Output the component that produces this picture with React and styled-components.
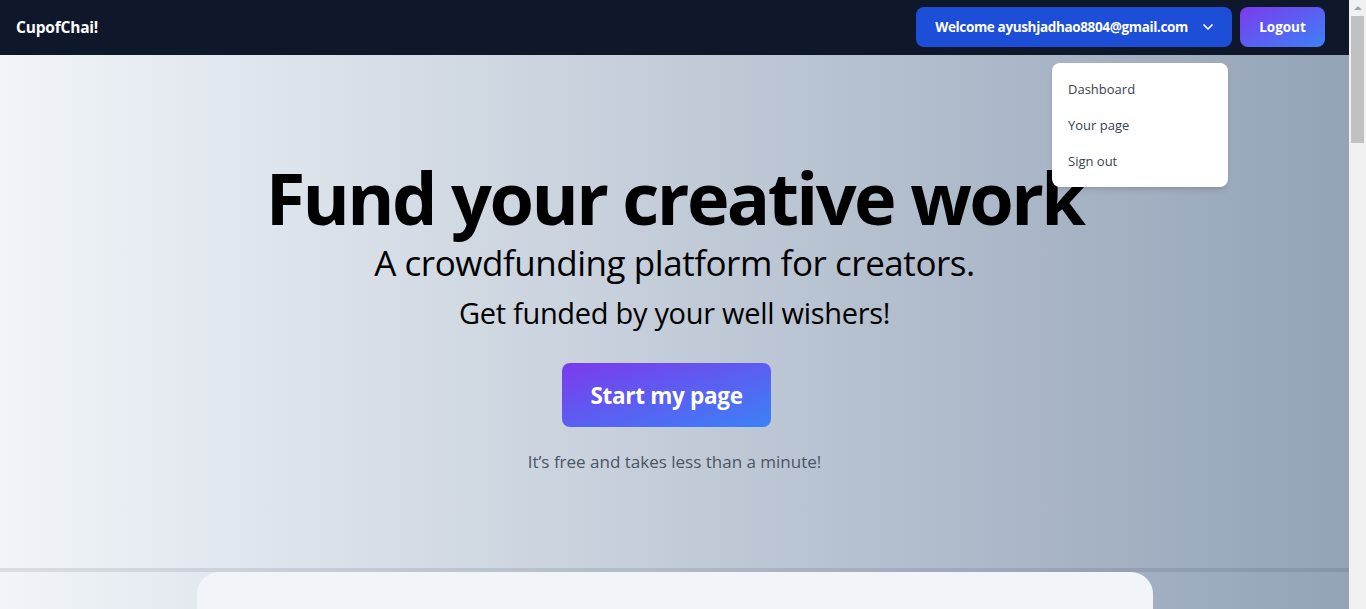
import React from "react";
import styled, { createGlobalStyle } from "styled-components";

const GlobalStyle = createGlobalStyle`
  html, body { margin: 0; padding: 0; overflow: hidden; }
  body {
    font-family: "Open Sans", "Noto Sans", "Liberation Sans", sans-serif;
  }
`;

const Viewport = styled.div`
  display: flex;
  height: 100vh;
  overflow: hidden;
`;

const Page = styled.div`
  flex: 1;
  min-width: 0;
  overflow: hidden;
  background: linear-gradient(to right, #f1f5f9, #94a3b8);
`;

const ScrollTrack = styled.div`
  width: 17px;
  flex-shrink: 0;
  background: #f1f1f1;
  display: flex;
  flex-direction: column;
  align-items: center;
`;

const ScrollArrow = styled.div`
  margin-top: 6px;
  width: 0;
  height: 0;
  border-left: 4px solid transparent;
  border-right: 4px solid transparent;
  border-bottom: 4px solid #a3a3a3;
`;

const ScrollThumb = styled.div`
  margin-top: 6px;
  width: 13px;
  height: 127px;
  background: #c1c1c1;
`;

const Nav = styled.nav`
  box-sizing: border-box;
  height: 55px;
  background: #0f172a;
  display: flex;
  align-items: center;
  justify-content: space-between;
  padding: 0 24px 1px 16px;
  color: #fff;
`;

const Logo = styled.div`
  font-weight: 700;
  font-size: 15.5px;
  letter-spacing: -0.2px;
`;

const NavRight = styled.div`
  display: flex;
  align-items: center;
  gap: 8px;
`;

const MenuWrap = styled.div`
  position: relative;
`;

const WelcomeButton = styled.button`
  height: 40px;
  display: flex;
  align-items: center;
  gap: 12px;
  padding: 0 16px 0 19px;
  background: #1d4ed8;
  color: #fff;
  border: 0;
  border-radius: 8px;
  font-family: inherit;
  font-weight: 700;
  font-size: 13.5px;
  letter-spacing: -0.35px;
`;

const LogoutButton = styled.button`
  height: 40px;
  width: 85px;
  background: linear-gradient(to bottom right, #7c3aed, #3b82f6);
  color: #fff;
  border: 0;
  border-radius: 8px;
  font-family: inherit;
  font-weight: 700;
  font-size: 13.5px;
`;

const Dropdown = styled.ul`
  position: absolute;
  top: 56px;
  right: 4px;
  width: 176px;
  margin: 0;
  padding: 8px 0;
  list-style: none;
  background: #fff;
  border-radius: 8px;
  box-shadow: 0 4px 6px -1px rgba(0,0,0,0.1), 0 2px 4px -2px rgba(0,0,0,0.1);
  z-index: 10;
`;

const DropItem = styled.li`
  padding: 8px 16px;
  font-size: 13px;
  line-height: 20px;
  color: #374151;
`;

const Hero = styled.section`
  height: 513px;
  display: flex;
  flex-direction: column;
  align-items: center;
  padding-top: 103px;
  box-sizing: border-box;
  text-align: center;
`;

const Title = styled.h1`
  margin: 0;
  font-size: 72px;
  line-height: 78px;
  font-weight: 700;
  letter-spacing: -2.6px;
  color: #000;
`;

const Subtitle = styled.p`
  margin: ${(p) => p.$mt}px 0 0;
  font-size: ${(p) => p.$size}px;
  line-height: ${(p) => p.$lh}px;
  letter-spacing: ${(p) => p.$ls}px;
  color: #000;
`;

const StartButton = styled.button`
  margin: 25px 16px 0 0;
  width: 209px;
  height: 64px;
  border: 0;
  border-radius: 8px;
  background: linear-gradient(to bottom right, #7c3aed, #3b82f6);
  color: #fff;
  font-family: inherit;
  font-weight: 700;
  font-size: 22.5px;
  letter-spacing: -0.3px;
`;

const Note = styled.p`
  margin: 24px 0 0;
  font-size: 17px;
  line-height: 22px;
  color: #4b5563;
`;

const Divider = styled.div`
  height: 4px;
  background: rgba(15, 23, 42, 0.1);
`;

const Card = styled.div`
  width: 956px;
  height: 600px;
  margin: 0 auto;
  background: #f1f5f9;
  border-radius: 22px 22px 0 0;
`;

function Chevron() {
  return (
    <svg width="16" height="16" viewBox="0 0 24 24" fill="none" stroke="#fff" strokeWidth="2.6" strokeLinecap="round" strokeLinejoin="round">
      <path d="m6 9 6 6 6-6" />
    </svg>
  );
}

export default function App() {
  return (
    <>
      <GlobalStyle />
      <Viewport>
        <Page>
          <Nav>
            <Logo>CupofChai!</Logo>
            <NavRight>
              <MenuWrap>
                <WelcomeButton>
                  Welcome ayushjadhao8804@gmail.com
                  <Chevron />
                </WelcomeButton>
                <Dropdown>
                  <DropItem>Dashboard</DropItem>
                  <DropItem>Your page</DropItem>
                  <DropItem>Sign out</DropItem>
                </Dropdown>
              </MenuWrap>
              <LogoutButton>Logout</LogoutButton>
            </NavRight>
          </Nav>
          <Hero>
            <Title>Fund your creative work</Title>
            <Subtitle $mt={4} $size={35} $lh={46} $ls={-0.45}>A crowdfunding platform for creators.</Subtitle>
            <Subtitle $mt={2} $size={29} $lh={50} $ls={-0.3}>Get funded by your well wishers!</Subtitle>
            <StartButton>Start my page</StartButton>
            <Note>It’s free and takes less than a minute!</Note>
          </Hero>
          <Divider />
          <Card />
        </Page>
        <ScrollTrack>
          <ScrollArrow />
          <ScrollThumb />
        </ScrollTrack>
      </Viewport>
    </>
  );
}
